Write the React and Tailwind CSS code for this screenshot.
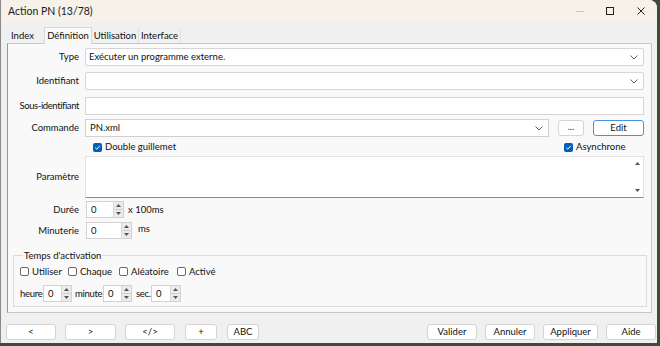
import React from 'react';

const font = { fontFamily: 'Lato, "Noto Sans", "Liberation Sans", sans-serif' };

function Chevron() {
  return (
    <svg width="8" height="5" viewBox="0 0 8 5" className="shrink-0">
      <polyline points="0.5,0.5 4,4 7.5,0.5" fill="none" stroke="#606060" strokeWidth="1" />
    </svg>
  );
}

function Check({ checked, label, className = '' }) {
  return (
    <div className={`flex items-center gap-[3px] whitespace-nowrap ${className}`}>
      {checked ? (
        <div className="w-[9px] h-[9px] shrink-0 rounded-[2px] bg-[#005fb8] flex items-center justify-center">
          <svg width="7" height="7" viewBox="0 0 7 7">
            <polyline points="1.2,3.6 2.8,5.2 5.8,1.8" fill="none" stroke="#fff" strokeWidth="1" />
          </svg>
        </div>
      ) : (
        <div className="w-[9px] h-[9px] shrink-0 rounded-[2px] border border-[#6a6a6a] bg-white" />
      )}
      <span>{label}</span>
    </div>
  );
}

function Arrow({ up }) {
  return (
    <svg width="5" height="3" viewBox="0 0 5 3">
      <polygon points={up ? '0,3 2.5,0 5,3' : '0,0 2.5,3 5,0'} fill="#555" />
    </svg>
  );
}

function Spin({ w }) {
  return (
    <div className={`flex h-[17px] shrink-0 border border-[#d2d2d2] bg-white ${w}`}>
      <div className="flex-1 pl-[4px] flex items-center">0</div>
      <div className="w-[10px] flex flex-col border-l border-[#d8d8d8]">
        <div className="flex-1 bg-[#ebebeb] flex items-center justify-center border-b border-[#d0d0d0]"><Arrow up /></div>
        <div className="flex-1 bg-[#ebebeb] flex items-center justify-center"><Arrow /></div>
      </div>
    </div>
  );
}

function Btn({ children, w, blue }) {
  return (
    <div className={`h-[16px] ${w} whitespace-nowrap bg-white rounded-[3px] border ${blue ? 'border-[#4a90d9]' : 'border-[#d4d4d4]'} flex items-center justify-center`}>
      {children}
    </div>
  );
}

function Row({ label, children, className = '', labelClass = '' }) {
  return (
    <div className={`flex items-center ${className}`}>
      <div className={`w-[71px] text-right whitespace-nowrap shrink-0 ${labelClass}`}>{label}</div>
      <div className="ml-[6px] flex-1 flex items-center">{children}</div>
    </div>
  );
}

export default function App() {
  return (
    <div className="w-[660px] h-[346px] bg-[#3f4a3d] overflow-hidden text-[9.5px] text-[#111] leading-none" style={font}>
      <div className="w-[657px] h-[343px] bg-[#f0f0f0] rounded-tr-[8px] border-l border-[#8a8a8a] flex flex-col">
        {/* Title bar */}
        <div className="h-[22px] shrink-0 bg-[#f6f1e9] rounded-tr-[8px] flex items-center pl-[7px]">
          <span className="text-[10.5px] text-[#1a1a1a] whitespace-nowrap">Action PN (13/78)</span>
          <div className="ml-auto flex items-center h-full">
            <div className="w-[30px] flex justify-center"><div className="w-[8px] h-px bg-[#c4c4c4]" /></div>
            <div className="w-[30px] flex justify-center"><div className="w-[8px] h-[8px] border border-[#222]" /></div>
            <div className="w-[32px] flex justify-center">
              <svg width="8" height="8" viewBox="0 0 8 8">
                <path d="M0.5 0.5 L7.5 7.5 M7.5 0.5 L0.5 7.5" stroke="#222" strokeWidth="1" />
              </svg>
            </div>
          </div>
        </div>

        {/* Tabs */}
        <div className="h-[21px] shrink-0 flex items-end pl-[5px] whitespace-nowrap">
          <div className="h-[15px] w-[38px] flex items-center pl-[5px]">Index</div>
          <div className="h-[17px] w-[48px] bg-[#f9f9f9] border border-b-0 border-[#d8d8d8] flex items-center justify-center -mb-px relative">Définition</div>
          <div className="h-[15px] w-[47px] border-r border-[#e0e0e0] flex items-center justify-center">Utilisation</div>
          <div className="h-[15px] w-[42px] border-r border-[#e0e0e0] flex items-center justify-center">Interface</div>
        </div>

        {/* Panel */}
        <div className="h-[270px] shrink-0 ml-[6px] w-[645px] bg-[#f9f9f9] border border-[#c8c8c8] border-l-[#9a9a9a] flex flex-col pr-[7px]">
          <Row label="Type" className="mt-[4px]">
            <div className="flex-1 h-[18px] bg-white border border-[#d6d6d6] rounded-[2px] flex items-center pl-[3px] pr-[5px]">
              <span className="flex-1 whitespace-nowrap">Exécuter un programme externe.</span>
              <Chevron />
            </div>
          </Row>
          <Row label="Identifiant" className="mt-[6px]">
            <div className="flex-1 h-[18px] bg-white border border-[#d6d6d6] rounded-[2px] flex items-center justify-end pr-[5px]">
              <Chevron />
            </div>
          </Row>
          <Row label="Sous-identifiant" labelClass="tracking-[-0.4px]" className="mt-[7px]">
            <div className="flex-1 h-[18px] bg-white border border-[#d6d6d6]" />
          </Row>
          <Row label="Commande" className="mt-[4px]">
            <div className="flex-1 h-[18px] bg-white border border-[#d0d0d0] flex items-center pl-[4px] pr-[5px]">
              <span className="flex-1">PN.xml</span>
              <Chevron />
            </div>
            <div className="ml-[9px]"><Btn w="w-[26px]"><span className="text-[#333] -mt-[3px]">...</span></Btn></div>
            <div className="ml-[9px]"><Btn w="w-[51px]" blue>Edit</Btn></div>
          </Row>
          <div className="flex items-center mt-[5px] ml-[85px] h-[10px]">
            <Check checked label="Double guillemet" className="w-[471px]" />
            <Check checked label="Asynchrone" />
          </div>
          <Row label="Paramètre" className="mt-[4px]">
            <div className="flex-1 h-[42px] bg-white border border-[#e2e2e2] border-b-[#8a8a8a] flex justify-end">
              <div className="w-[12px] flex flex-col items-center justify-between py-[5px]">
                <Arrow up />
                <Arrow />
              </div>
            </div>
          </Row>
          <Row label="Durée" className="mt-[3px]">
            <div className="ml-px"><Spin w="w-[38px]" /></div>
            <span className="ml-[4px] whitespace-nowrap">x 100ms</span>
          </Row>
          <Row label="Minuterie" className="mt-[4px]">
            <div className="ml-px"><Spin w="w-[46px]" /></div>
            <span className="ml-[6px] -mt-[4px]">ms</span>
          </Row>

          <fieldset className="mt-[12px] ml-[5px] mr-[-3px] h-[56px] border border-[#dcdcdc] pl-[6px]">
            <legend className="ml-[3px] px-[1px] leading-none whitespace-nowrap">Temps d'activation</legend>
            <div className="flex items-center mt-[6px]">
              <Check label="Utiliser" className="w-[48px]" />
              <Check label="Chaque" className="w-[51px]" />
              <Check label="Aléatoire" className="w-[58px]" />
              <Check label="Activé" />
            </div>
            <div className="flex items-center mt-[9px] whitespace-nowrap">
              <span className="w-[23px] shrink-0 tracking-[-0.3px]">heure</span>
              <Spin w="w-[29px]" />
              <span className="ml-[3px] w-[28px] shrink-0 tracking-[-0.3px]">minute</span>
              <Spin w="w-[29px]" />
              <span className="ml-[4px] w-[15px] shrink-0 tracking-[-0.3px]">sec.</span>
              <Spin w="w-[30px]" />
            </div>
          </fieldset>
        </div>

        {/* Bottom buttons */}
        <div className="flex items-center mt-[11px] pl-[5px] pr-[1px]">
          <Btn w="w-[50px]">&lt;</Btn>
          <div className="ml-[9px]"><Btn w="w-[51px]">&gt;</Btn></div>
          <div className="ml-[9px]"><Btn w="w-[50px]">&lt;/&gt;</Btn></div>
          <div className="ml-[10px]"><Btn w="w-[32px]">+</Btn></div>
          <div className="ml-[10px]"><Btn w="w-[32px]">ABC</Btn></div>
          <div className="ml-auto flex items-center">
            <Btn w="w-[50px]">Valider</Btn>
            <div className="ml-[8px]"><Btn w="w-[50px]">Annuler</Btn></div>
            <div className="ml-[8px]"><Btn w="w-[55px]">Appliquer</Btn></div>
            <div className="ml-[8px]"><Btn w="w-[50px]">Aide</Btn></div>
          </div>
        </div>
      </div>
    </div>
  );
}
